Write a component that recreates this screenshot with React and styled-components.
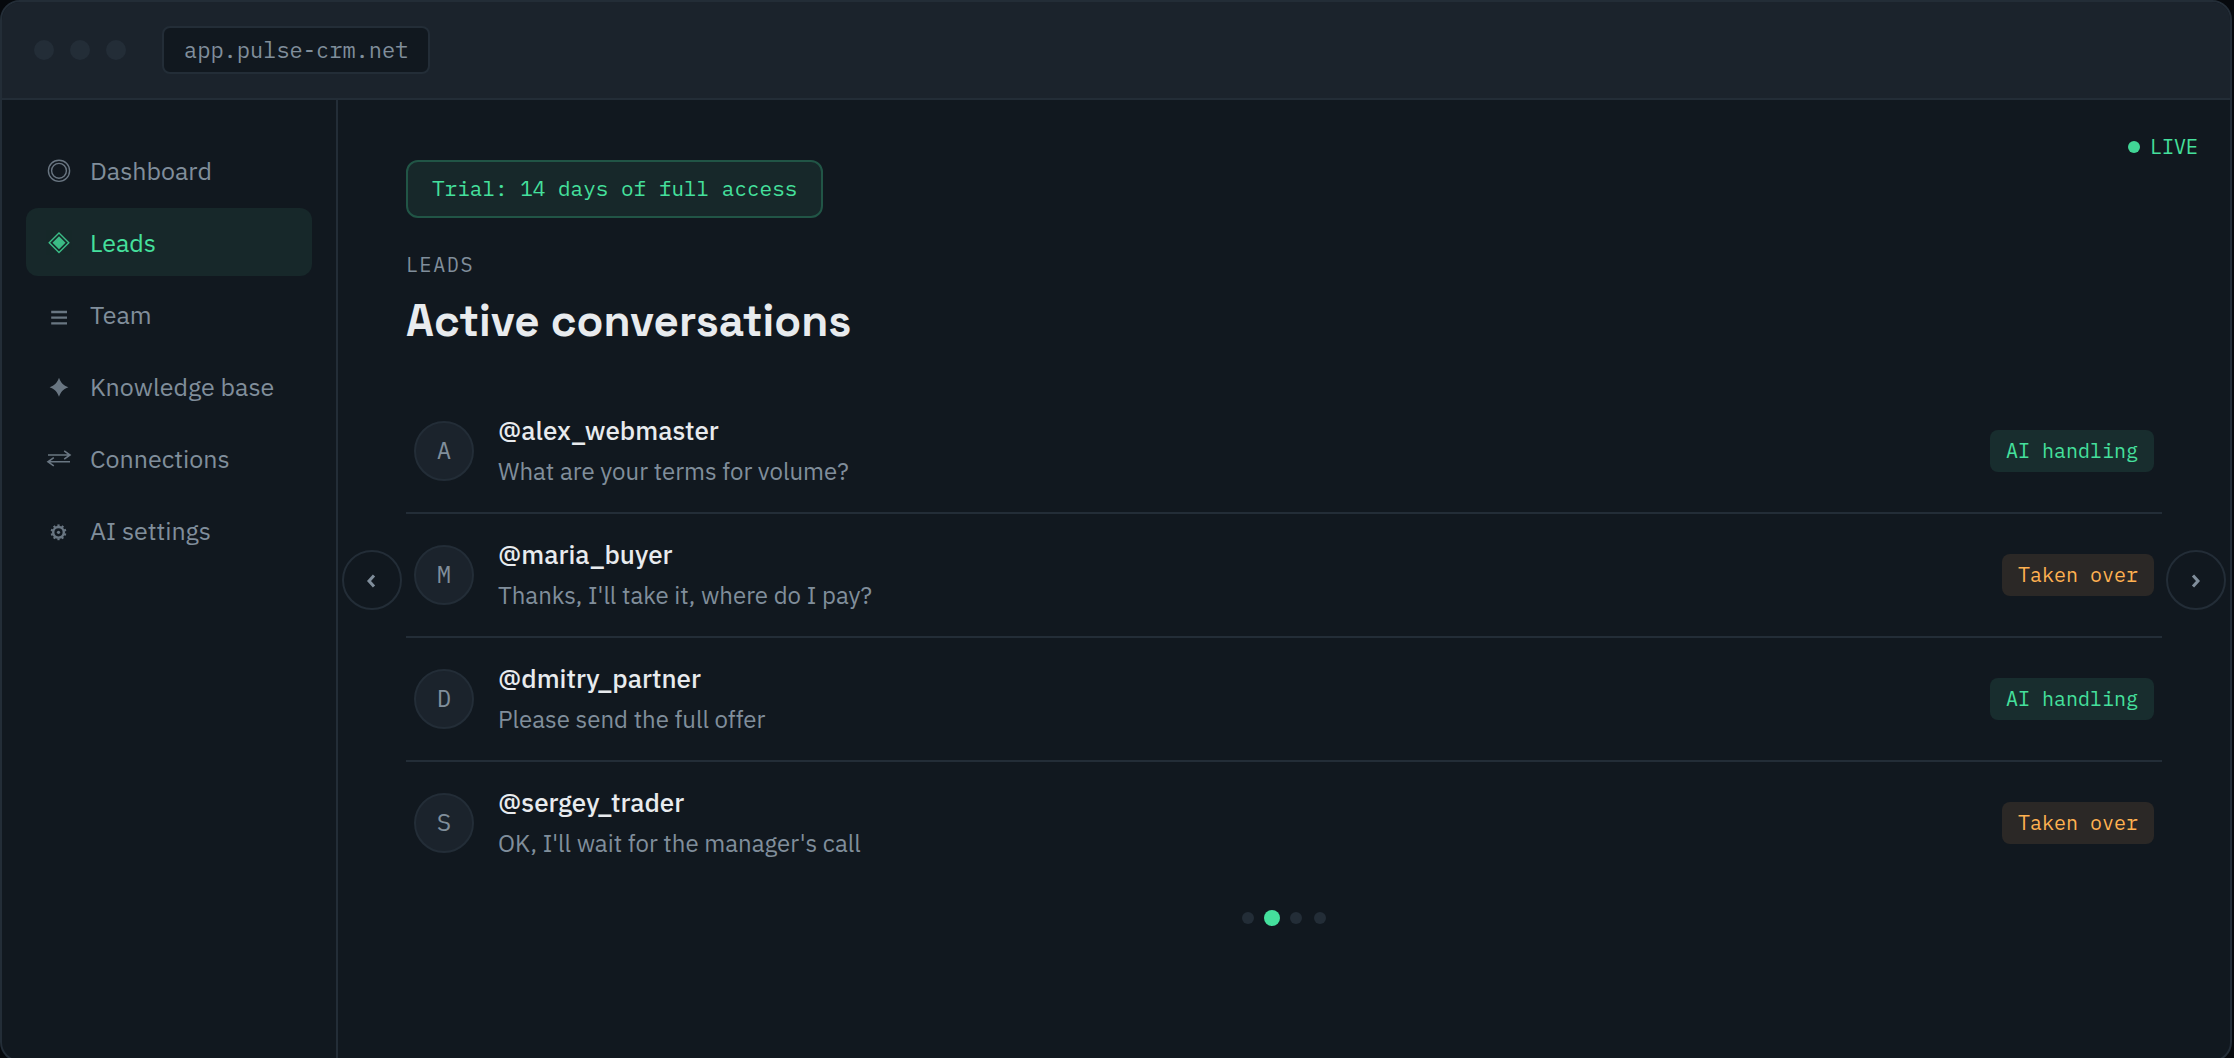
import React, { useState } from 'react';
import styled, { createGlobalStyle } from 'styled-components';

const navItems = [
  { id: 'dashboard', label: 'Dashboard' },
  { id: 'leads', label: 'Leads' },
  { id: 'team', label: 'Team' },
  { id: 'knowledge', label: 'Knowledge base' },
  { id: 'connections', label: 'Connections' },
  { id: 'settings', label: 'AI settings' },
];

const leads = [
  { id: 1, name: '@alex_webmaster', text: 'What are your terms for volume?', status: 'ai' },
  { id: 2, name: '@maria_buyer', text: "Thanks, I'll take it, where do I pay?", status: 'manual' },
  { id: 3, name: '@dmitry_partner', text: 'Please send the full offer', status: 'ai' },
  { id: 4, name: '@sergey_trader', text: "OK, I'll wait for the manager's call", status: 'manual' },
];

const statusLabels = { ai: 'AI handling', manual: 'Taken over' };
const slides = ['Dashboard', 'Leads', 'Team', 'Knowledge base'];

const gearTeeth = [0, 36, 72, 108, 144, 180, 216, 252, 288, 324];

const icons = {
  dashboard: (
    <g fill='none' stroke='currentColor' strokeWidth='1.4'>
      <circle cx='13' cy='13.8' r='10.6' />
      <circle cx='13' cy='13.8' r='7.4' />
    </g>
  ),
  leads: (
    <g>
      <path d='M13 3.9 22.8 13.7 13 23.5 3.2 13.7Z' fill='none' stroke='currentColor' strokeWidth='1.4' />
      <path d='M13 7.2 19.5 13.7 13 20.2 6.5 13.7Z' fill='currentColor' />
    </g>
  ),
  team: <path d='M5.2 11h15.8M5.2 16.6h15.8M5.2 22.3h15.8' stroke='currentColor' strokeWidth='2.3' />,
  knowledge: (
    <path
      d='M13 4.8C14.8 9.8 17.4 12.4 22.4 14.3 17.4 16.2 14.8 18.8 13 23.8 11.2 18.8 8.6 16.2 3.6 14.3 8.6 12.4 11.2 9.8 13 4.8Z'
      fill='currentColor'
    />
  ),
  connections: (
    <path
      d='M2 10h22M18.2 5.9 24 10 18.2 14.1M24 16.8H2M7.8 12.7 2 16.8 7.8 20.9'
      fill='none'
      stroke='currentColor'
      strokeWidth='1.6'
    />
  ),
  settings: (
    <g fill='none' stroke='currentColor'>
      <circle cx='12.5' cy='15.3' r='5.3' strokeWidth='2.4' />
      <circle cx='12.5' cy='15.3' r='1.6' fill='currentColor' stroke='none' />
      {gearTeeth.map((angle) => (
        <path
          key={angle}
          d='M12.5 9.4V7.4'
          strokeWidth='2.2'
          transform={`rotate(${angle} 12.5 15.3)`}
        />
      ))}
    </g>
  ),
};

const App = () => {
  const [page, setPage] = useState('leads');
  const [slide, setSlide] = useState(1);

  const moveSlide = (step) => {
    setSlide((slide + step + slides.length) % slides.length);
  };

  return (
    <>
      <GlobalStyle />
      <Viewport>
        <Window>
          <TitleBar>
            <WindowDot />
            <WindowDot />
            <WindowDot />
            <Address>app.pulse-crm.net</Address>
          </TitleBar>
          <Body>
            <Sidebar>
              {navItems.map(({ id, label }) => (
                <NavLink
                  key={id}
                  href={`#${id}`}
                  $active={page === id}
                  onClick={() => setPage(id)}
                >
                  <NavIcon viewBox='0 1 26 26' aria-hidden='true'>
                    {icons[id]}
                  </NavIcon>
                  {label}
                </NavLink>
              ))}
            </Sidebar>
            <Main>
              <Live>LIVE</Live>
              <Trial>Trial: 14 days of full access</Trial>
              <Eyebrow>Leads</Eyebrow>
              <Title>Active conversations</Title>
              <List>
                {leads.map(({ id, name, text, status }) => (
                  <Row key={id}>
                    <Avatar>{name[1].toUpperCase()}</Avatar>
                    <Info>
                      <Name>{name}</Name>
                      <Message>{text}</Message>
                    </Info>
                    <Status $status={status}>{statusLabels[status]}</Status>
                  </Row>
                ))}
              </List>
              <Pager>
                {slides.map((item, index) => (
                  <PagerDot
                    key={item}
                    type='button'
                    aria-label={item}
                    $active={index === slide}
                    onClick={() => setSlide(index)}
                  />
                ))}
              </Pager>
              <Arrow type='button' aria-label='Previous' $side='left' onClick={() => moveSlide(-1)}>
                <svg width='14' height='18' viewBox='0 0 14 18' aria-hidden='true'>
                  <path d='M9 4.4 4 10l5 5.6' />
                </svg>
              </Arrow>
              <Arrow type='button' aria-label='Next' $side='right' onClick={() => moveSlide(1)}>
                <svg width='14' height='18' viewBox='0 0 14 18' aria-hidden='true'>
                  <path d='M4 4.4 9 10l-5 5.6' />
                </svg>
              </Arrow>
            </Main>
          </Body>
        </Window>
      </Viewport>
    </>
  );
};

const GlobalStyle = createGlobalStyle`
  :root {
    --clr-page: #06090d;
    --clr-bg: #11181f;
    --clr-panel: #1b232c;
    --clr-line: #232d37;
    --clr-text: #e8ebee;
    --clr-muted: #808e9b;
    --clr-green: #45e09d;
    --clr-green-tint: #17282a;
    --clr-green-badge: #182d2e;
    --clr-green-line: #215546;
    --clr-orange: #ffb151;
    --clr-orange-badge: #2b2826;
    --font-sans: 'IBM Plex Sans', Roboto, sans-serif;
    --font-mono: 'IBM Plex Mono', 'Liberation Mono', monospace;
    --font-title: 'Space Grotesk', Inter, sans-serif;
  }
  *,
  *::before,
  *::after {
    box-sizing: border-box;
  }
  body {
    margin: 0;
    background: var(--clr-page);
    color: var(--clr-text);
    font-family: var(--font-sans);
  }
  h1,
  p,
  ul {
    margin: 0;
    padding: 0;
  }
`;

const Viewport = styled.div`
  height: 100vh;
  padding-right: 2px;
  overflow: hidden;
`;

const Window = styled.div`
  display: flex;
  flex-direction: column;
  min-height: calc(100vh + 4px);
  background: var(--clr-bg);
  border: 2px solid var(--clr-line);
  border-radius: 20px;
  overflow: hidden;
`;

const TitleBar = styled.header`
  display: flex;
  align-items: center;
  gap: 16px;
  padding: 24px 32px;
  background: var(--clr-panel);
  border-bottom: 2px solid var(--clr-line);
`;

const WindowDot = styled.span`
  width: 20px;
  height: 20px;
  border-radius: 50%;
  background: var(--clr-line);
`;

const Address = styled.div`
  margin-left: 20px;
  padding: 0 20px;
  background: var(--clr-bg);
  border: 2px solid var(--clr-line);
  border-radius: 8px;
  color: var(--clr-muted);
  font-family: var(--font-mono);
  font-size: 22px;
  line-height: 44px;
`;

const Body = styled.div`
  display: flex;
  flex: 1;
`;

const Sidebar = styled.nav`
  display: flex;
  flex-direction: column;
  gap: 4px;
  flex: 0 0 336px;
  padding: 36px 24px;
  border-right: 2px solid var(--clr-line);
`;

const NavLink = styled.a`
  display: flex;
  align-items: center;
  gap: 18px;
  padding: 2px 20px 0;
  border-radius: 12px;
  background: ${({ $active }) => ($active ? 'var(--clr-green-tint)' : 'transparent')};
  color: ${({ $active }) => ($active ? 'var(--clr-green)' : 'var(--clr-muted)')};
  font-size: 25px;
  line-height: 66px;
  text-decoration: none;
`;

const NavIcon = styled.svg`
  width: 26px;
  height: 26px;
  opacity: 0.8;
`;

const Main = styled.main`
  position: relative;
  flex: 1;
  padding: 60px 68px;
`;

const Live = styled.div`
  position: absolute;
  top: 32px;
  right: 32px;
  display: flex;
  align-items: center;
  gap: 10px;
  color: var(--clr-green);
  font-family: var(--font-mono);
  font-size: 20px;
  line-height: 30px;
  &::before {
    content: '';
    width: 12px;
    height: 12px;
    border-radius: 50%;
    background: var(--clr-green);
    opacity: 0.95;
  }
`;

const Trial = styled.div`
  width: fit-content;
  padding: 0 24px 2px;
  background: var(--clr-green-tint);
  border: 2px solid var(--clr-green-line);
  border-radius: 12px;
  color: var(--clr-green);
  font-family: var(--font-mono);
  font-size: 21px;
  line-height: 52px;
`;

const Eyebrow = styled.p`
  margin-top: 34px;
  color: var(--clr-muted);
  font-family: var(--font-mono);
  font-size: 20px;
  line-height: 26px;
  letter-spacing: 0.08em;
  text-transform: uppercase;
`;

const Title = styled.h1`
  margin-top: 14px;
  font-family: var(--font-title);
  font-size: 44px;
  font-weight: 700;
  line-height: 58px;
`;

const List = styled.ul`
  margin-top: 40px;
  list-style: none;
`;

const Row = styled.li`
  display: flex;
  align-items: center;
  gap: 24px;
  padding: 22px 8px;
  border-bottom: 2px solid var(--clr-line);
  &:last-child {
    border-bottom: none;
  }
`;

const Avatar = styled.div`
  width: 60px;
  height: 60px;
  background: var(--clr-panel);
  border: 2px solid var(--clr-line);
  border-radius: 50%;
  color: var(--clr-muted);
  font-family: var(--font-mono);
  font-size: 24px;
  line-height: 55px;
  text-align: center;
`;

const Info = styled.div`
  flex: 1;
`;

const Name = styled.p`
  font-size: 26px;
  font-weight: 500;
  line-height: 36px;
`;

const Message = styled.p`
  margin-top: 4px;
  color: var(--clr-muted);
  font-size: 24px;
  line-height: 38px;
`;

const Status = styled.span`
  padding: 0 16px;
  border-radius: 8px;
  background: ${({ $status }) =>
    $status === 'ai' ? 'var(--clr-green-badge)' : 'var(--clr-orange-badge)'};
  color: ${({ $status }) => ($status === 'ai' ? 'var(--clr-green)' : 'var(--clr-orange)')};
  font-family: var(--font-mono);
  font-size: 20px;
  line-height: 42px;
`;

const Pager = styled.div`
  display: flex;
  justify-content: center;
  gap: 12px;
  margin-top: 28px;
`;

const PagerDot = styled.button`
  width: 12px;
  height: 12px;
  padding: 0;
  border: none;
  border-radius: 50%;
  background: ${({ $active }) => ($active ? 'var(--clr-green)' : 'var(--clr-line)')};
  box-shadow: ${({ $active }) => ($active ? '0 0 0 2px var(--clr-green)' : 'none')};
  cursor: pointer;
`;

const Arrow = styled.button`
  position: absolute;
  top: 50%;
  ${({ $side }) => $side}: 4px;
  display: flex;
  align-items: center;
  justify-content: center;
  width: 60px;
  height: 60px;
  padding: 0;
  transform: translateY(-50%);
  background: var(--clr-bg);
  border: 2px solid var(--clr-line);
  border-radius: 50%;
  color: var(--clr-muted);
  cursor: pointer;
  path {
    fill: none;
    stroke: currentColor;
    stroke-width: 3;
  }
`;

export default App;
